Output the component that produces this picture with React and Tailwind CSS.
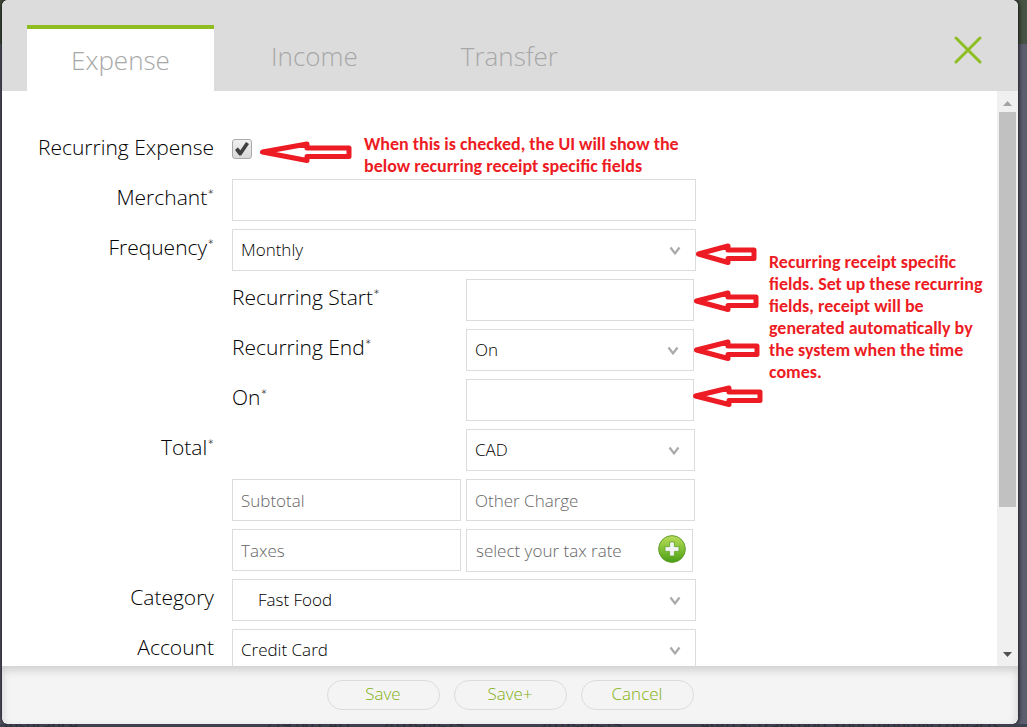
const field =
  "h-[42px] w-full min-w-0 rounded-none border border-[#dcdcdc] bg-white px-2 text-[17px] text-black outline-none placeholder:text-[#666]";

function Arrow({ width, head, className }) {
  const right = width - 3;
  return (
    <svg
      aria-hidden="true"
      width={width}
      height="22"
      viewBox={`0 0 ${width} 22`}
      className={`absolute ${className}`}
    >
      <path
        d={`M2.5 11 L${head + 1} 3 V7 H${right} V15.5 H${head + 1} V19.5 Z`}
        fill="#fff"
        stroke="#ed1c24"
        strokeWidth="5"
        strokeLinejoin="round"
      />
    </svg>
  );
}

function Select({ id, label, value, inset = "" }) {
  return (
    <div className="relative w-full">
      <select id={id} aria-label={label} defaultValue={value} className={`${field} appearance-none ${inset}`}>
        <option>{value}</option>
      </select>
      <svg
        aria-hidden="true"
        viewBox="0 0 12 10"
        className="pointer-events-none absolute top-[17px] right-[15px] h-[10px] w-3"
        fill="none"
        stroke="#aaa"
        strokeWidth="2.2"
      >
        <path d="M1.5 1.5 6 7.5 10.5 1.5" />
      </svg>
    </div>
  );
}

function Label({ htmlFor, children, required }) {
  return (
    <label htmlFor={htmlFor} className="text-[21px] leading-9 whitespace-nowrap text-black">
      {children}
      {required && <span className="align-top font-['Lato',sans-serif] text-base leading-8">*</span>}
    </label>
  );
}

function Row({ id, label, required, children }) {
  return (
    <div className="flex h-[50px] gap-[18px]">
      <div className="w-[212px] shrink-0 text-right">
        {label && (
          <Label htmlFor={id} required={required}>
            {label}
          </Label>
        )}
      </div>
      <div className="flex w-[464px] shrink-0 items-start">{children}</div>
    </div>
  );
}

function SubRow({ id, label, children }) {
  return (
    <Row>
      <div className="w-[234px] shrink-0">
        <Label htmlFor={id} required>
          {label}
        </Label>
      </div>
      <div className="w-[228px]">{children}</div>
    </Row>
  );
}

function Tab({ children }) {
  return (
    <button type="button" role="tab" aria-selected="false" className="pb-[3px] text-[26px] text-[#a8a8a8]">
      {children}
    </button>
  );
}

function FooterButton({ children }) {
  return (
    <button
      type="button"
      className="h-[30px] w-[113px] rounded-full border border-[#dcdcdc] pb-1 text-[17px] leading-none text-[#82b012]"
    >
      {children}
    </button>
  );
}

function ScrollTrack() {
  return (
    <div aria-hidden="true" className="flex w-[21px] shrink-0 flex-col items-center bg-[#f0f0f0]">
      <div className="flex h-[21px] items-center pt-1">
        <svg width="9" height="5" viewBox="0 0 9 5" fill="#a3a3a3">
          <path d="M4.5 0 9 5H0z" />
        </svg>
      </div>
      <div className="w-[17px] grow-[395] bg-[#c1c1c1]" />
      <div className="grow-[136]" />
      <div className="flex h-[23px] items-center">
        <svg width="9" height="5" viewBox="0 0 9 5" fill="#505050">
          <path d="M0 0h9L4.5 5z" />
        </svg>
      </div>
    </div>
  );
}

export default function App() {
  return (
    <div className="flex h-screen flex-col overflow-hidden bg-[linear-gradient(to_bottom,#475343_44px,#5d5f6f_44px)] font-['Open_Sans',sans-serif] font-light">
      <div
        role="dialog"
        aria-label="Add expense"
        className="mr-[9px] ml-0.5 flex min-h-0 flex-1 flex-col overflow-hidden rounded-md bg-white shadow-[0_0_4px_1px_rgba(0,0,0,0.75)]"
      >
        <header className="flex h-[91px] shrink-0 items-end justify-between bg-[#dcdcdc] pr-[35px] pl-[25px]">
          <div role="tablist" className="flex h-[66px]">
            <button
              type="button"
              role="tab"
              aria-selected="true"
              className="w-[187px] border-t-4 border-[#8fbc21] bg-white text-[26px] text-[#a8a8a8]"
            >
              Expense
            </button>
            <div className="ml-[57px] flex gap-[103px]">
              <Tab>Income</Tab>
              <Tab>Transfer</Tab>
            </div>
          </div>
          <button type="button" aria-label="Close" className="mb-[26px]">
            <svg width="30" height="30" viewBox="0 0 30 30" stroke="#8fbe22" strokeWidth="3" strokeLinecap="round">
              <path d="M3 3 27 27M27 3 3 27" />
            </svg>
          </button>
        </header>

        <div className="flex min-h-0 flex-1">
          <form className="relative min-w-0 flex-1 overflow-hidden pt-[38px]">
            <Row id="recurring" label="Recurring Expense">
              <div className="relative mt-[10px] h-5 w-5">
                <input
                  id="recurring"
                  type="checkbox"
                  defaultChecked
                  className="peer block h-5 w-5 appearance-none rounded-[3px] border border-[#aaa] bg-linear-to-b from-[#f0f0f0] to-[#d9d9d9]"
                />
                <svg
                  aria-hidden="true"
                  viewBox="0 0 20 20"
                  className="pointer-events-none absolute inset-0 hidden peer-checked:block"
                  fill="#404040"
                >
                  <path d="M3 11 5.8 8.4 8.4 11.2 14 3 17 5 9.2 16.6 7.2 16.4z" />
                </svg>
              </div>
            </Row>
            <Row id="merchant" label="Merchant" required>
              <input id="merchant" type="text" className={field} />
            </Row>
            <Row id="frequency" label="Frequency" required>
              <Select id="frequency" value="Monthly" />
            </Row>
            <SubRow id="start" label="Recurring Start">
              <input id="start" type="text" className={field} />
            </SubRow>
            <SubRow id="end" label="Recurring End">
              <Select id="end" value="On" />
            </SubRow>
            <SubRow id="end-on" label="On">
              <input id="end-on" type="text" className={field} />
            </SubRow>
            <Row id="currency" label="Total" required>
              <div className="ml-[234px] w-[229px]">
                <Select id="currency" value="CAD" />
              </div>
            </Row>
            <Row>
              <div className="grid w-[463px] grid-cols-2 gap-[5px]">
                <input aria-label="Subtotal" placeholder="Subtotal" className={field} />
                <input aria-label="Other Charge" placeholder="Other Charge" className={field} />
              </div>
            </Row>
            <Row>
              <div className="grid w-[463px] grid-cols-2 gap-[5px]">
                <input aria-label="Taxes" placeholder="Taxes" className={field} />
                <div className="mr-0.5 flex h-[43px] items-center justify-between border border-[#dcdcdc] pr-1.5">
                  <input
                    aria-label="Tax rate"
                    placeholder="select your tax rate"
                    className="h-10 w-[180px] pl-[9px] text-[17px] outline-none placeholder:text-[#666]"
                  />
                  <button type="button" aria-label="Add tax rate" className="pb-1">
                    <svg width="28" height="28" viewBox="0 0 28 28" className="block">
                      <defs>
                        <linearGradient id="leaf" x1="0" y1="0" x2="0" y2="1">
                          <stop offset="0" stopColor="#b9dc5c" />
                          <stop offset="0.5" stopColor="#84c136" />
                          <stop offset="1" stopColor="#4a9d16" />
                        </linearGradient>
                      </defs>
                      <circle cx="14" cy="14" r="13.4" fill="url(#leaf)" stroke="#5d9a2b" strokeWidth="0.9" />
                      <path
                        d="M11.6 7h4.8v4.6H21v4.8h-4.6V21h-4.8v-4.6H7v-4.8h4.6z"
                        fill="#f2f2f2"
                        stroke="#5da327"
                        strokeWidth="0.8"
                      />
                    </svg>
                  </button>
                </div>
              </div>
            </Row>
            <Row id="category" label="Category">
              <Select id="category" value="Fast Food" inset="pl-[25px]" />
            </Row>
            <Row id="account" label="Account">
              <Select id="account" value="Credit Card" />
            </Row>

            <div className="font-['Carlito','Lato',sans-serif] text-lg leading-[22px] font-bold text-[#ed1c24]">
              <Arrow width={92} head={46} className="top-[50px] left-[258px]" />
              <p className="absolute top-[42px] left-[362px] w-[330px]">
                When this is checked, the UI will show the below recurring receipt specific fields
              </p>
              <Arrow width={61} head={31} className="top-[152px] left-[694px]" />
              <Arrow width={65} head={33} className="top-[199px] left-[692px]" />
              <Arrow width={66} head={33} className="top-[248px] left-[692px]" />
              <Arrow width={70} head={35} className="top-[294px] left-[691px]" />
              <p className="absolute top-[160px] left-[767px] w-[220px]">
                Recurring receipt specific fields. Set up these recurring fields, receipt will be generated
                automatically by the system when the time comes.
              </p>
            </div>
          </form>
          <ScrollTrack />
        </div>

        <footer className="flex h-[58px] shrink-0 justify-center gap-[14px] rounded-b-lg bg-[#f4f4f4] pt-[14px] shadow-[inset_0_4px_8px_rgba(0,0,0,0.16)]">
          <FooterButton>Save</FooterButton>
          <FooterButton>Save+</FooterButton>
          <FooterButton>Cancel</FooterButton>
        </footer>
      </div>
      <div
        aria-hidden="true"
        className="flex h-[3px] shrink-0 overflow-hidden bg-[#3d404e] pl-1 text-base leading-[3px] font-normal whitespace-nowrap text-[#2b2e39]"
      >
        <span className="w-[260px]">Insurance</span>
        <span className="w-[117px]">219.00 CAD</span>
        <span className="w-[158px]">2016-06-15</span>
        <span className="w-[161px]">2016-06-15</span>
        <span>Auto &amp; Transport Your monthly contacts</span>
      </div>
    </div>
  );
}
